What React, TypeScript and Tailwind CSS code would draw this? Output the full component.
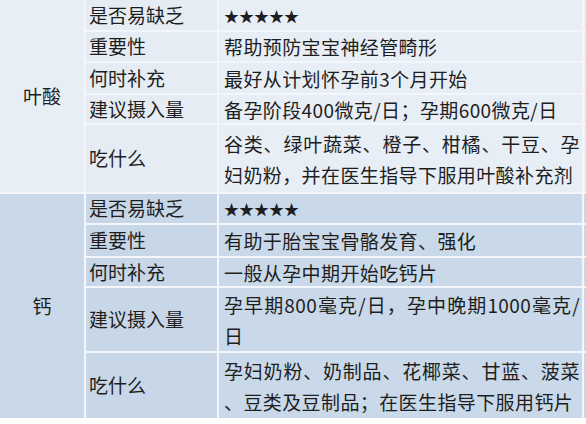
import React from "react";

type Row = { label: string; lines: string[]; h: string };

const top: Row[] = [
  { label: "是否易缺乏", lines: ["★★★★★"], h: "h-[32px]" },
  { label: "重要性", lines: ["帮助预防宝宝神经管畸形"], h: "h-[31px]" },
  { label: "何时补充", lines: ["最好从计划怀孕前3个月开始"], h: "h-[32px]" },
  { label: "建议摄入量", lines: ["备孕阶段400微克/日；孕期600微克/日"], h: "h-[30px]" },
  { label: "吃什么", lines: ["谷类、绿叶蔬菜、橙子、柑橘、干豆、孕", "妇奶粉，并在医生指导下服用叶酸补充剂"], h: "h-[67px]" },
];

const bottom: Row[] = [
  { label: "是否易缺乏", lines: ["★★★★★"], h: "h-[31px]" },
  { label: "重要性", lines: ["有助于胎宝宝骨骼发育、强化"], h: "h-[33px]" },
  { label: "何时补充", lines: ["一般从孕中期开始吃钙片"], h: "h-[30px]" },
  { label: "建议摄入量", lines: ["孕早期800毫克/日，孕中晚期1000毫克/", "日"], h: "h-[65px]" },
  { label: "吃什么", lines: ["孕妇奶粉、奶制品、花椰菜、甘蓝、菠菜", "、豆类及豆制品；在医生指导下服用钙片"], h: "h-[65px]" },
];

function Section({ name, rows, bg, labelBg, last }: { name: string; rows: Row[]; bg: string; labelBg: string; last?: boolean }) {
  return (
    <div className={`flex ${bg} ${last ? "" : "border-b-2 border-[#f3f7fb]"}`}>
      <div className="w-[86px] shrink-0 flex items-center justify-center border-r-2 border-[#f3f7fb] text-[19px]">
        {name}
      </div>
      <div className="flex-1 flex flex-col">
        {rows.map((r, i) => (
          <div
            key={i}
            className={`flex ${r.h} ${i < rows.length - 1 ? "border-b-2 border-[#f3f7fb]" : ""}`}
          >
            <div className={`w-[133px] shrink-0 flex items-center pl-[3px] border-r-2 border-[#f3f7fb] ${labelBg}`}>
              {r.label}
            </div>
            <div className="w-[363px] shrink-0 flex flex-col justify-center pl-[5px] pr-[2px]">
              {r.lines.map((l, j) =>
                l.startsWith("★") ? (
                  <div key={j} className="text-[15px] leading-[31px] tracking-[0px]">{l}</div>
                ) : (
                  <div
                    key={j}
                    className={`leading-[31px] whitespace-nowrap tracking-[0.4px] ${
                      r.lines.length > 1 && j === 0 ? "text-justify [text-align-last:justify]" : ""
                    }`}
                  >
                    {l}
                  </div>
                )
              )}
            </div>
            <div className="w-[2px] shrink-0 bg-[#f3f7fb]" />
          </div>
        ))}
      </div>
    </div>
  );
}

export default function App() {
  return (
    <div
      className="w-[586px] h-[424px] bg-white text-[#1e1e1e] text-[19px] overflow-hidden"
      style={{ fontFamily: '"Noto Sans CJK SC", "Noto Sans", sans-serif' }}
    >
      <Section name="叶酸" rows={top} bg="bg-[#e8eef5]" labelBg="bg-[#e5ecf3]" />
      <Section name="钙" rows={bottom} bg="bg-[#c9d9e9]" labelBg="bg-[#c7d7e8]" last />
    </div>
  );
}
